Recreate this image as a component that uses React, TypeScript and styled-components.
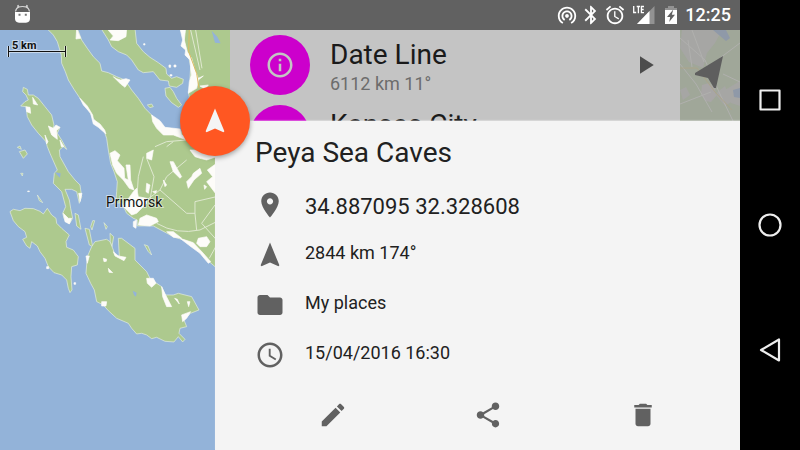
import React from "react";
import styled, { createGlobalStyle } from "styled-components";

const GlobalStyle = createGlobalStyle`
  * { box-sizing: border-box; }
  body { margin: 0; font-family: Roboto, "Liberation Sans", sans-serif; color: #212121; background: #000; }
  h1, h2, p, ul, dl, dd { margin: 0; padding: 0; font-weight: 400; }
  button { margin: 0; padding: 0; border: 0; background: none; font: inherit; cursor: pointer; }
  svg { display: block; }
`;

const Device = styled.div`
  display: grid;
  grid-template-columns: minmax(0, 1fr) 60px;
  min-height: 100vh;
`;

const Screen = styled.div`
  display: grid;
  grid-template-rows: 30px 1fr;
  overflow: hidden;
`;

const StatusBar = styled.header`
  display: flex;
  align-items: center;
  justify-content: space-between;
  padding: 0 9px 0 12px;
  background: #616161;
  color: #fff;
`;

const StatusIcons = styled.div`
  display: flex;
  align-items: center;
  gap: 2px;
`;

const Signal = styled.div`
  padding: 0 2px 0 5px;
`;

const Time = styled.time`
  font-size: 18px;
  line-height: 30px;
  font-weight: 500;
  padding-left: 2px;
`;

const Content = styled.main`
  display: grid;
  grid-template-columns: 215px 15px minmax(0, 1fr) 60px;
  grid-template-rows: 91px 1fr;
`;

const MapLayer = styled.svg`
  grid-area: 1 / 1 / 3 / 3;
  width: 100%;
  height: 100%;
  min-height: 0;
  background: #93b3d9;
`;

const MapLabel = styled.text<{ $size: number; $bold?: boolean }>`
  font-family: Roboto, sans-serif;
  font-size: ${(p) => p.$size}px;
  font-weight: ${(p) => (p.$bold ? 700 : 400)};
  fill: #111;
  stroke: #ffffff;
  stroke-opacity: 0.5;
  stroke-width: 2px;
  paint-order: stroke;
`;

const PlaceList = styled.ul`
  grid-area: 1 / 3 / 2 / 4;
  list-style: none;
  height: 91px;
  overflow: hidden;
  background: #c4c4c4;
`;

const PlaceRow = styled.li`
  display: flex;
  align-items: center;
  height: 70px;
  padding: 0 20px;
`;

const PlaceBadge = styled.span`
  display: grid;
  place-items: center;
  flex: none;
  width: 60px;
  height: 60px;
  border-radius: 50%;
  background: #cc00cc;
  color: #c4c4c4;
`;

const PlaceText = styled.div`
  flex: 1;
  padding: 4px 20px 0;
`;

const PlaceName = styled.h2`
  font-size: 28px;
  line-height: 34px;
  color: #1a1a1a;
`;

const PlaceMeta = styled.p`
  min-height: 24px;
  font-size: 18px;
  line-height: 24px;
  color: #6c6c6c;
`;

const IconButton = styled.button`
  display: grid;
  place-items: center;
  width: 30px;
  height: 30px;
  color: #616161;
`;

const DarkIconButton = styled(IconButton)`
  color: #4c4c4c;
`;

const CompassButton = styled.button`
  grid-area: 1 / 4 / 2 / 5;
  height: 91px;
  overflow: hidden;
`;

const Sheet = styled.section`
  grid-area: 2 / 2 / 3 / 5;
  position: relative;
  display: flex;
  flex-direction: column;
  background: #f4f4f4;
  box-shadow: 0 -1px 1px rgba(255, 255, 255, 0.3);
`;

const Fab = styled.button`
  && {
    position: absolute;
    left: -35px;
    top: -35px;
    display: grid;
    place-items: center;
    width: 70px;
    height: 70px;
    border-radius: 50%;
    background: #ff5722;
    color: #f4f4f4;
    box-shadow: 0 2px 5px rgba(0, 0, 0, 0.35);
  }
`;

const Title = styled.h1`
  padding: 12px 40px 0;
  font-size: 28px;
  line-height: 40px;
`;

const Details = styled.ul`
  list-style: none;
  padding: 7px 40px 0;
`;

const Detail = styled.li<{ $large?: boolean }>`
  display: grid;
  grid-template-columns: 30px 1fr;
  column-gap: 20px;
  align-items: center;
  height: 50px;
  color: #616161;

  span {
    color: #212121;
    font-size: ${(p) => (p.$large ? 22 : 18)}px;
    line-height: 24px;
    padding: ${(p) => (p.$large ? "4px 0 0" : "0 0 4px")};
  }
`;

const Actions = styled.div`
  display: flex;
  justify-content: space-around;
  padding: 20px 20px 20px 40px;
`;

const SystemNav = styled.nav`
  display: flex;
  flex-direction: column;
  align-items: center;
  justify-content: center;
  gap: 95px;
  background: #000;
`;

const NavButton = styled(IconButton)`
  color: #eee;
`;

const P = {
  pin: "M12 2C8.13 2 5 5.13 5 9c0 5.25 7 13 7 13s7-7.75 7-13c0-3.87-3.13-7-7-7zm0 9.5c-1.38 0-2.5-1.12-2.5-2.5s1.12-2.5 2.5-2.5 2.5 1.12 2.5 2.5-1.12 2.5-2.5 2.5z",
  arrow: "M12 2L4.5 20.29l.71.71L12 18l6.79 3 .71-.71z",
  folder: "M10 4H4c-1.1 0-1.99.9-1.99 2L2 18c0 1.1.9 2 2 2h16c1.1 0 2-.9 2-2V8c0-1.1-.9-2-2-2h-8l-2-2z",
  clock: "M11.99 2C6.47 2 2 6.48 2 12s4.47 10 9.99 10C17.52 22 22 17.52 22 12S17.52 2 11.99 2zM12 20c-4.42 0-8-3.58-8-8s3.58-8 8-8 8 3.58 8 8-3.58 8-8 8zm.5-13H11v6l5.25 3.15.75-1.23-4.5-2.67z",
  edit: "M3 17.25V21h3.75L17.81 9.94l-3.75-3.75L3 17.25zM20.71 7.04c.39-.39.39-1.02 0-1.41l-2.34-2.34c-.39-.39-1.02-.39-1.41 0l-1.83 1.83 3.75 3.75 1.83-1.83z",
  share: "M18 16.08c-.76 0-1.44.3-1.96.77L8.91 12.7c.05-.23.09-.46.09-.7s-.04-.47-.09-.7l7.05-4.11c.54.5 1.25.81 2.04.81 1.66 0 3-1.34 3-3s-1.34-3-3-3-3 1.34-3 3c0 .24.04.47.09.7L8.04 9.81C7.5 9.31 6.79 9 6 9c-1.66 0-3 1.34-3 3s1.34 3 3 3c.79 0 1.5-.31 2.04-.81l7.12 4.16c-.05.21-.08.43-.08.65 0 1.61 1.31 2.92 2.92 2.92 1.61 0 2.92-1.31 2.92-2.92s-1.31-2.92-2.92-2.92z",
  trash: "M6 19c0 1.1.9 2 2 2h8c1.1 0 2-.9 2-2V7H6v12zM19 4h-3.5l-1-1h-5l-1 1H5v2h14V4z",
  info: "M11 17h2v-6h-2v6zm1-15C6.48 2 2 6.48 2 12s4.48 10 10 10 10-4.48 10-10S17.52 2 12 2zm0 18c-4.41 0-8-3.59-8-8s3.59-8 8-8 8 3.59 8 8-3.59 8-8 8zM11 9h2V7h-2v2z",
  play: "M8 5v14l11-7z",
  hotspot: "M12 11c-1.1 0-2 .9-2 2s.9 2 2 2 2-.9 2-2-.9-2-2-2zm6 2c0-3.31-2.69-6-6-6s-6 2.69-6 6c0 2.22 1.21 4.15 3 5.19l1-1.74c-1.19-.7-2-1.97-2-3.45 0-2.21 1.79-4 4-4s4 1.79 4 4c0 1.48-.81 2.75-2 3.45l1 1.74c1.79-1.04 3-2.97 3-5.19zM12 3C6.48 3 2 7.48 2 13c0 3.7 2.01 6.92 4.99 8.65l1-1.73C5.61 18.53 4 15.96 4 13c0-4.42 3.58-8 8-8s8 3.58 8 8c0 2.96-1.61 5.53-4 6.92l1 1.73c2.99-1.73 5-4.95 5-8.65 0-5.52-4.48-10-10-10z",
  bluetooth: "M17.71 7.71L12 2h-1v7.59L6.41 5 5 6.41 10.59 12 5 17.59 6.41 19 11 14.41V22h1l5.71-5.71-4.3-4.29 4.3-4.29zM13 5.83l1.88 1.88L13 9.59V5.83zm1.88 10.46L13 18.17v-3.76l1.88 1.88z",
  alarm: "M22 5.72l-4.6-3.86-1.29 1.53 4.6 3.86L22 5.72zM7.88 3.39L6.6 1.86 2 5.71l1.29 1.53 4.59-3.85zM12.5 8H11v6l4.75 2.85.75-1.23-4-2.37V8zM12 4c-4.97 0-9 4.03-9 9s4.02 9 9 9c4.97 0 9-4.03 9-9s-4.03-9-9-9zm0 16c-3.87 0-7-3.13-7-7s3.13-7 7-7 7 3.13 7 7-3.13 7-7 7z",
};

function Icon({ d, size = 30 }: { d: string; size?: number }) {
  return (
    <svg width={size} height={size} viewBox="0 0 24 24" fill="currentColor" aria-hidden="true">
      <path d={d} />
    </svg>
  );
}

function StatusArea() {
  return (
    <StatusBar>
      <svg width="22" height="24" viewBox="0 0 22 24" aria-label="Android">
        <path d="M3 9h15v6.500q0 4-4 4.200H7q-4-.2-4-4.200z" fill="#fff" />
        <path d="M3.500 8.500Q4 5 7 4L5.800 2M17.500 8.500Q17 5 14 4l1.200-2M7 4q3.500-1 7 0" fill="#d4d4d4" stroke="#d4d4d4" strokeWidth="1.200" />
        <path d="M6.500 10.800h2v2h-2zM12.800 10.800h2v2h-2z" fill="#777" />
      </svg>
      <StatusIcons>
        <Icon d={P.hotspot} size={22} />
        <Icon d={P.bluetooth} size={22} />
        <Icon d={P.alarm} size={22} />
        <Signal>
          <svg width="24" height="20" viewBox="0 0 24 20" aria-label="LTE signal">
            <path d="M21.500 1v18H4z" fill="#929292" />
            <path d="M16.500 6v13H4z" fill="#fff" />
            <path d="M-1 0h13v10H-1z" fill="#616161" />
            <path d="M.7 1v6.500h2.500M3.700 1.500h3.300M5.400 1.500v6.700M11 1.500H8.400v6.100H11M8.400 4.500h2.300" fill="none" stroke="#fff" strokeWidth="1.300" />
          </svg>
        </Signal>
        <svg width="20" height="20" viewBox="0 0 20 20" aria-label="Charging">
          <path d="M7 1h6v2h3v4H4V3h3z" fill="#929292" />
          <path d="M4 5h12v14H4z" fill="#fff" />
          <path d="M12.300 4.500L6 12h3.200l-1 5L14 9.700h-3.200z" fill="#616161" />
        </svg>
        <Time>12:25</Time>
      </StatusIcons>
    </StatusBar>
  );
}

const WATER = "#93b3d9";
const LAND = "#adc98e";
const SAND = "#fdfcf9";

const land = [
  "M140 85L160 105 172 125 184 165 185 190 196 215 205 240 222 268 240 295 262 325 280 355 295 378 312 392 320 415 325 450 332 490 342 515 352 545 350 575 347 610 365 608 380 640 400 655 412 660 412 678 460 678 520 710 580 730 610 770 645 800 700 840V400L620 410 540 395 500 395 470 370 455 345 435 325 415 295 395 270 375 240 350 230 325 218 305 213 300 190 280 170 262 145 245 120 232 85Z",
  "M303 85L325 120 335 140 355 155 380 165 395 180 415 210 430 218 460 215 480 240 505 243 508 258 530 262 548 250 550 238 530 230 515 235 500 222 498 205 475 188 450 172 430 155 410 130 405 85Z",
  "M540 85L552 110 553 140 565 165 572 200 570 235 575 262 565 275 568 290 570 400 720 400V85Z",
  "M495 265L510 262 520 275 530 295 545 315 535 322 515 308 498 288Z",
  "M70 262L82 268 85 285 100 285 115 295 135 320 155 345 162 375 160 385 180 382 172 400 185 420 200 448 190 440 178 450 180 470 205 515 225 540 240 555 245 590 238 610 230 575 215 568 195 568 208 600 212 625 218 655 208 672 192 655 188 640 197 620 185 575 160 550 163 520 172 510 150 460 142 440 138 425 115 400 95 375 82 350 78 320 62 318 75 305 85 300 78 285 68 275Z",
  "M225 640L235 645 243 688 230 678ZM255 685L268 688 278 740 268 735ZM278 662L284 662 276 690 272 680ZM312 668L322 680 318 688ZM330 700L341 710 336 740 331 725ZM433 734L444 738 455 765 445 755ZM112 585L128 608 118 602ZM58 455L75 450 82 462 70 475ZM52 442L60 438 64 448ZM62 520L69 520 67 528ZM442 315L455 312 460 320 450 323Z",
  "M30 635L40 628 60 632 75 625 100 626 120 634 130 642 142 625 155 645 168 655 170 670 185 685 208 705 198 725 200 742 220 750 235 770 232 795 215 800 213 830 216 870 210 878 205 865 200 840 185 825 162 818 145 800 135 775 120 755 112 738 95 725 90 745 80 738 68 718 80 712 75 695 55 680 40 662Z",
  "M275 740L285 725 320 718 330 725 340 750 345 765 358 768 355 715 365 715 405 745 405 780 440 815 450 835 470 850 485 860 495 885 520 885 535 880 575 890 597 930 572 940 552 960 560 980 540 985 537 1000 555 1018 548 1026 535 1010 522 1026 495 1024 470 1012 455 1016 440 1005 425 1000 410 1002 395 985 385 970 350 955 325 932 310 915 290 905 283 870 272 850 258 820 262 770Z",
];

const sand = [
  "M320 85L380 85 378 110 355 122 330 120 340 108ZM230 85L242 115 228 117ZM340 230L350 236 362 240 378 236 390 240 375 262 362 252Z",
  "M240 295L262 318 278 345 280 358 300 372 314 390 318 402 295 382 280 372 272 340 250 315Z",
  "M455 345L480 362 495 382 540 387 545 405 570 410 560 420 520 405 490 405 470 385 458 365Z",
  "M540 85L557 85 553 120 562 155 575 175 585 210 595 235 610 228 595 240 590 265 565 280 568 245 574 225 570 180 555 165 557 150 543 138 548 120ZM600 258L625 255 615 268Z",
  "M98 292L113 315 100 312ZM78 320L90 322 92 340 80 335ZM145 378L160 385 168 375 180 382 170 392 172 418 155 405ZM190 640L205 655 215 655 208 672 195 665ZM236 580L246 580 240 605ZM135 405L144 425 140 432ZM180 420L192 440 184 440Z",
  "M330 460L345 452 360 465 352 482 372 505 374 535 385 540 378 495 390 495 392 540 402 570 388 565 370 540 350 520 338 495Z",
  "M400 575L410 565 415 590 440 595 440 610 425 625 410 640 395 645 380 630 370 618ZM440 645L470 655 475 665 450 678 415 675 420 655ZM400 665L410 660 408 685 400 680Z",
  "M500 695L520 695 545 715 520 712ZM595 715L620 710 630 725 620 740 600 740 590 730ZM540 715L580 728 610 760 632 785 625 790 600 760 570 738Z",
  "M510 485L520 485 545 530 540 535 520 515ZM440 460L460 450 455 480 440 475ZM560 545L575 530 580 520 600 505 605 520 582 540 565 565ZM622 510L650 490 650 585 620 545 638 530ZM440 550L450 555 445 580 438 575ZM490 540L500 555 495 560ZM570 450L600 450 650 470 620 480 600 475 585 470ZM612 555L620 560 614 568ZM458 575L470 572 466 580Z",
  "M340 755L355 768 378 772 372 782 345 768ZM440 835L460 835 468 850 455 862 442 850ZM485 860L497 885 515 920 500 920 488 890ZM545 945L572 935 560 955 548 965ZM562 905L570 905 566 920ZM524 895L532 898 538 912ZM305 905L320 905 318 918 305 918ZM310 775L320 778 319 784 312 785ZM325 805L338 818 327 817ZM258 768L268 768 262 790Z",
  "M507 195h5v7h-5ZM522 195h6v6h-6ZM431 131h4v4h-4ZM510 224h6v4h-6ZM140 800h6v6h-6ZM222 848h5v5h-5ZM83 573h5v2h-5Z",
];

const roads =
  "M430 470L415 530 412 575M440 475L462 530 450 600M480 570L560 640 585 640V605L650 590M585 640L590 690M470 670Q530 705 600 690L650 665M605 670L645 615M605 670L650 720M480 570L500 530 560 480M440 600L480 570M465 440L500 425 560 420M500 440L520 425M572 90L600 210M587 90L606 205M628 775L650 735";

function CoastMap() {
  return (
    <MapLayer viewBox="0 30 230 420" preserveAspectRatio="xMinYMin slice" aria-label="Map">
      <g transform="scale(0.3333)">
        <g fill={LAND} stroke="#e6eee0" strokeWidth="2" strokeLinejoin="round">
          {land.map((d) => <path key={d} d={d} />)}
        </g>
        <path d={roads} fill="none" stroke="#dfe8d0" strokeWidth="3" />
        <g fill={SAND} stroke={SAND} strokeWidth="2" strokeLinejoin="round">
          {sand.map((d) => <path key={d} d={d} />)}
        </g>
        <path d="M635 92L652 110 662 130 645 128ZM398 872L410 878 408 890 402 885ZM165 517L182 520 180 533 174 528Z" fill={WATER} />
        <path d="M568 85L566 155 590 220 597 265" fill="none" stroke="#dcbb62" strokeWidth="3" />
      </g>
      <path d="M8.500 46v11M65.500 46v11M8.500 51.500h57" fill="none" stroke="#fff" strokeOpacity="0.500" strokeWidth="3" />
      <path d="M8.500 46v11M65.500 46v11M8.500 51.500h57" fill="none" stroke="#111" strokeWidth="1" />
      <MapLabel $size={11} $bold x="12" y="49">5 km</MapLabel>
      <MapLabel $size={14} x="106" y="207">Primorsk</MapLabel>
    </MapLayer>
  );
}

function MapSliver() {
  return (
    <CompassButton aria-label="Navigate">
      <svg width="60" height="91" viewBox="0 0 60 91" aria-hidden="true">
        <path d="M0 0h60v91H0z" fill="#a0a799" />
        <path d="M2 0h40l-7 13-8 10-4 15-14-6-9-14zM45 60l15-9v25l-9-3zM35 64l10-8 6 16-6 4zM0 60l6-3 4 8-7 5z" fill="#a6a6a4" />
        <path d="M22 55l7-2 6 5 1 8-5 6-6-1-4-7z" fill="#a8a6a6" />
        <path d="M33 0h13l4 8-4 3zM53 60l7-2v10l-6-1z" fill="#8f99a8" />
        <path d="M0 8l25 22 14 32 14 29M0 34l16 20 16 28M12 0l12 32M0 74l31-12M40 28l20-15M43 44l17 8M8 10l4 27" fill="none" stroke="#b0b0ae" strokeWidth="1" />
        <path d="M0 38h17l18 24 17 18" fill="none" stroke="#aba48a" strokeWidth="1" />
        <path d="M43 26L15 43v2l13 3 6 10h2z" fill="#5e5e5e" />
      </svg>
    </CompassButton>
  );
}

function Place({ name, meta }: { name: string; meta?: string }) {
  return (
    <PlaceRow>
      <PlaceBadge><Icon d={P.info} /></PlaceBadge>
      <PlaceText>
        <PlaceName>{name}</PlaceName>
        <PlaceMeta>{meta}</PlaceMeta>
      </PlaceText>
      <DarkIconButton aria-label={`Open ${name}`}><Icon d={P.play} /></DarkIconButton>
    </PlaceRow>
  );
}

const details = [
  { icon: P.pin, text: "34.887095 32.328608", large: true },
  { icon: P.arrow, text: "2844 km 174°" },
  { icon: P.folder, text: "My places" },
  { icon: P.clock, text: "15/04/2016 16:30" },
];

const actions = [
  { label: "Edit", icon: P.edit },
  { label: "Share", icon: P.share },
  { label: "Delete", icon: P.trash },
];

const navShapes = [
  { label: "Recent apps", d: "M5.500 5.500h19v19h-19z" },
  { label: "Home", d: "M4.500 15a10.500 10.500 0 1 0 21 0a10.500 10.500 0 1 0-21 0" },
  { label: "Back", d: "M24 4.500v21L6 15z" },
];

export default function App() {
  return (
    <>
      <GlobalStyle />
      <Device>
        <Screen>
          <StatusArea />
          <Content>
            <CoastMap />
            <PlaceList>
              <Place name="Date Line" meta="6112 km 11°" />
              <Place name="Kansas City" />
            </PlaceList>
            <MapSliver />
            <Sheet>
              <Fab aria-label="Navigate to place"><Icon d={P.arrow} /></Fab>
              <Title>Peya Sea Caves</Title>
              <Details>
                {details.map((item) => (
                  <Detail key={item.text} $large={item.large}>
                    <Icon d={item.icon} />
                    <span>{item.text}</span>
                  </Detail>
                ))}
              </Details>
              <Actions>
                {actions.map((action) => (
                  <IconButton key={action.label} aria-label={action.label}><Icon d={action.icon} /></IconButton>
                ))}
              </Actions>
            </Sheet>
          </Content>
        </Screen>
        <SystemNav aria-label="System">
          {navShapes.map((shape) => (
            <NavButton key={shape.label} aria-label={shape.label}>
              <svg width="30" height="30" viewBox="0 0 30 30" fill="none" stroke="currentColor" strokeWidth="2.200" strokeLinejoin="round" aria-hidden="true">
                <path d={shape.d} />
              </svg>
            </NavButton>
          ))}
        </SystemNav>
      </Device>
    </>
  );
}
